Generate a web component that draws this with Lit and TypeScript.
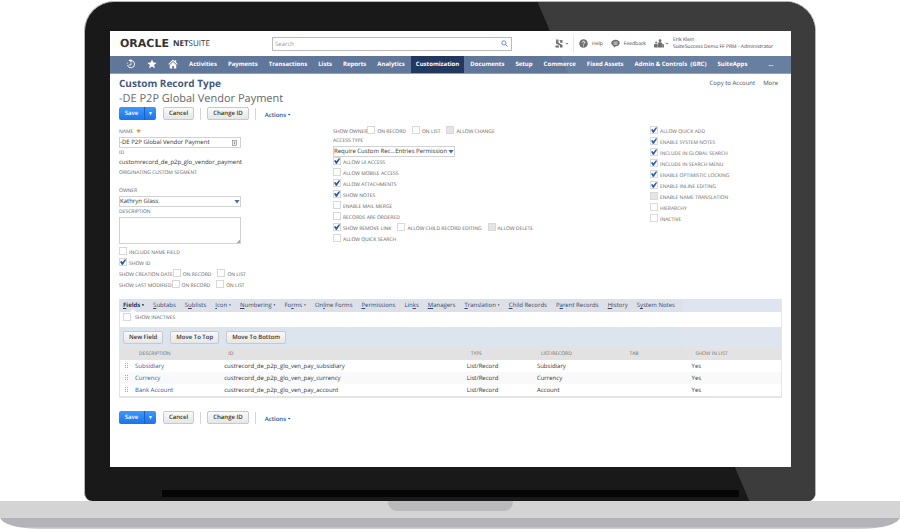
import { LitElement, html, css, svg, nothing, TemplateResult } from "lit";
import { customElement } from "lit/decorators.js";

interface Check { label: string; on?: boolean; off?: boolean; }

const NAV = ["Activities", "Payments", "Transactions", "Lists", "Reports", "Analytics", "Customization",
  "Documents", "Setup", "Commerce", "Fixed Assets", "Admin & Controls  (GRC)", "SuiteApps"];

/* An underscore marks the access key of a tab, a trailing dot the tabs that hold data. */
const TABS = ["_Fields •", "_Subtabs", "S_ublists", "_Icon •", "_Numbering •", "Fo_rms •", "On_line Forms",
  "_Permissions", "Lin_ks", "_Managers", "_Translation •", "_Child Records", "P_arent Records", "_History", "S_ystem Notes"];

const ACCESS: Check[][] = [
  [{ label: "ALLOW UI ACCESS", on: true }],
  [{ label: "ALLOW MOBILE ACCESS" }],
  [{ label: "ALLOW ATTACHMENTS", on: true }],
  [{ label: "SHOW NOTES", on: true }],
  [{ label: "ENABLE MAIL MERGE" }],
  [{ label: "RECORDS ARE ORDERED" }],
  [{ label: "SHOW REMOVE LINK", on: true }, { label: "ALLOW CHILD RECORD EDITING" }, { label: "ALLOW DELETE", off: true }],
  [{ label: "ALLOW QUICK SEARCH" }],
];

const OPTIONS: Check[][] = [
  [{ label: "ALLOW QUICK ADD", on: true }],
  [{ label: "ENABLE SYSTEM NOTES", on: true }],
  [{ label: "INCLUDE IN GLOBAL SEARCH", on: true }],
  [{ label: "INCLUDE IN SEARCH MENU", on: true }],
  [{ label: "ENABLE OPTIMISTIC LOCKING", on: true }],
  [{ label: "ENABLE INLINE EDITING", on: true }],
  [{ label: "ENABLE NAME TRANSLATION", off: true }],
  [{ label: "HIERARCHY" }],
  [{ label: "INACTIVE" }],
];

const ROWS = [
  ["Subsidiary", "custrecord_de_p2p_glo_ven_pay_subsidiary", "Subsidiary"],
  ["Currency", "custrecord_de_p2p_glo_ven_pay_currency", "Currency"],
  ["Bank Account", "custrecord_de_p2p_glo_ven_pay_account", "Account"],
];

const icon = (cls: string, box: string, body: unknown) =>
  html`<svg class=${cls} viewBox=${box} aria-hidden="true">${body}</svg>`;

const clockIcon = icon("nav-icon", "0 0 20 20", svg`
  <path d="M10 3a7.300 7.300 0 1 1-7.200 9" fill="none" stroke="#fff" stroke-width="1.800"/>
  <path d="M4.500 2.500L11 .5v6z" fill="#fff"/>
  <path d="M10 7v5H5.500" fill="none" stroke="#fff" stroke-width="1.700"/>
  <path d="M2.300 9.500l1.200-2.300" stroke="#fff" stroke-width="1.500"/>`);
const starIcon = icon("nav-icon", "0 0 20 20", svg`
  <path d="M10 1l2.600 6.200 6.700.5-5.100 4.400 1.600 6.600-5.800-3.600-5.800 3.600 1.600-6.600L.7 7.700l6.700-.5z" fill="#fff"/>`);
const homeIcon = icon("nav-icon", "0 0 20 20", svg`
  <path d="M10 1l3.500 3.300V2.500h2.800V7l3 2.900-1.200 1.400L10 3.800l-8.100 7.500L.7 9.900z" fill="#fff"/>
  <path d="M10 5.800l6.500 6V19h-4.800v-5.200H8.300V19H3.500v-7.200z" fill="#fff"/>`);
const searchIcon = icon("glass", "0 0 14 14", svg`
  <circle cx="5.800" cy="5.800" r="4.200" fill="none" stroke="#4a6da6" stroke-width="1.500"/>
  <path d="M9 9l4 4" stroke="#4a6da6" stroke-width="1.800"/>`);
const createIcon = icon("tool", "0 0 18 18", svg`
  <path d="M2 1h5v8H2z" fill="#777"/>
  <path d="M9 2h6v6h-4z" fill="#777"/>
  <path d="M2 5l13 7v5h-5v-4L2 9zM1 13h7v4H1z" fill="#666"/>`);
const helpIcon = icon("tool", "0 0 18 18", svg`
  <circle cx="9" cy="9" r="8.500" fill="#666"/>
  <path d="M6.300 7.200c0-3.600 5.600-3.400 5.400-.3-.1 1.900-2.600 2-2.600 4.100" fill="none" stroke="#fff" stroke-width="1.900"/>
  <circle cx="9.100" cy="13.600" r="1.200" fill="#fff"/>`);
const feedbackIcon = icon("tool", "0 0 18 18", svg`
  <path d="M9 1.500c5 0 8.500 2.800 8.500 6.600s-3.500 6.600-8 6.600L5.500 17.500v-3.400C2.300 13 .5 11 .5 8.100.5 4.300 4 1.500 9 1.500z" fill="#666"/>
  <path d="M5 6h8M5 8.300h8M5 10.600h8" stroke="#fff" stroke-width="1.100"/>`);
const roleIcon = icon("role-icon", "0 0 20 18", svg`
  <circle cx="12" cy="3.500" r="2.800" fill="#666"/><circle cx="4.500" cy="7" r="2.200" fill="#777"/>
  <path d="M7.500 17V9.500c0-4 9-4 9 0V17zM0 17v-5c0-3.500 7-3.500 7 0v5zM17 17v-7c2 0 3 1 3 3v4z" fill="#666"/>`);
const memoIcon = icon("memo", "0 0 10 12", svg`
  <rect x="1" y="1" width="8" height="10" fill="#fff" stroke="#777" stroke-width="1.200"/>
  <path d="M5 3v6M3.500 4.500h3M3.500 7.500h3" stroke="#666" stroke-width="1"/>`);
const gripIcon = icon("grip", "0 0 4 6", svg`
  <path d="M0 0h1v1H0zM2 0h1v1H2zM0 2h1v1H0zM2 2h1v1H2zM0 4h1v1H0zM2 4h1v1H2z" fill="#aaa"/>`);

@customElement("app-root")
export class AppRoot extends LitElement {
  static styles = css`
    :host { display: flex; flex-direction: column; min-height: 100vh; background: #fff; color: #444;
      font-family: "Open Sans", "Noto Sans", sans-serif; font-size: 6px; line-height: 8px; text-rendering: geometricPrecision; }
    * { box-sizing: border-box; }
    button, input, select, textarea { font: inherit; color: inherit; margin: 0; border-radius: 0; text-rendering: inherit; }
    a { color: inherit; text-decoration: none; }
    h1, h2, p { margin: 0; }
    svg { display: block; flex: none; }

    .lid { position: relative; flex: 1; display: flex; flex-direction: column; margin: 1px 84px 0;
      padding: 29px 24px 0 25px; background: #191919; border: solid #b4b6b6; border-width: 1px 1px 0;
      border-radius: 30px 30px 8px 8px; overflow: hidden; }
    .lid::before, .lid::after { content: ""; position: absolute; inset: 0; pointer-events: none;
      clip-path: polygon(62% 0, 100% 0, 100% 100%, 91% 100%); }
    .lid::before { background: #303030; }
    .lid::after { background: rgba(255, 255, 255, 0.06); }
    .screen { position: relative; flex: 1; background: #fff; min-width: 0; }
    .chin { display: flex; flex-direction: column; height: 34px; padding: 23px 52px 0; }
    .hinge { position: relative; height: 7px; background: #050505; }
    .base { position: relative; height: 28px; background: linear-gradient(#d4d4d4 17px, #b4b3b9 17px, #b4b3b9 26px, #cfcfd2 27px);
      border-radius: 0 0 40px 40px / 0 0 12px 12px; }
    .notch { width: 125px; height: 10px; margin: 0 auto; background: #bababc; border-radius: 0 0 9px 9px; }

    .top { display: flex; align-items: center; height: 25px; padding: 0 18px 0 10px; }
    .logo { display: flex; align-items: center; gap: 4px; width: 152px; color: #333; line-height: 12px; }
    .oracle { font: bold 11px/12px "DejaVu Sans", sans-serif; }
    .netsuite { font-size: 8px; }
    .search { display: flex; align-items: center; width: 240px; height: 14px; border: 1px solid #bbb; padding: 0 3px 0 2px; }
    .search input { flex: 1; min-width: 0; border: 0; padding: 0; outline: 0; background: none; }
    .search input::placeholder { color: #999; }
    .glass { width: 7px; height: 7px; }
    .tools { display: flex; align-items: center; margin-left: auto; font-size: 5px; color: #333; }
    .tool { width: 9px; height: 9px; }
    .role-icon { width: 10px; height: 9px; }
    .caret { width: 4px; height: 2px; margin-left: 1px; background: #666; clip-path: polygon(0 0, 100% 0, 50% 100%); }
    .item { display: flex; align-items: center; gap: 4px; margin-right: 8px; }
    .pick { display: flex; align-items: center; margin-right: 4px; }
    .rule { width: 1px; height: 18px; background: #e6e6e6; margin-right: 5px; }
    .who { line-height: 7px; white-space: nowrap; }

    .nav { display: flex; align-items: center; gap: 1px; height: 18px; padding-left: 11px; background: #607799; color: #fff;
      font-weight: 700; white-space: pre; border-bottom: 1px solid #8c9ebc; }
    .nav a { display: flex; align-items: center; height: 17px; padding: 0 5px 1px; }
    .nav a.current { background: #22385f; }
    .nav a.more { margin-left: 10px; }
    .nav-icon { width: 10px; height: 10px; }

    .page { padding: 3px 9px 0; }
    .heading { display: flex; justify-content: space-between; padding-right: 4px; line-height: 12px; }
    .heading h1 { font-size: 10px; line-height: 12px; color: #46597f; }
    .links { display: flex; gap: 8px; }
    .page h2 { font-size: 11px; line-height: 16px; margin-top: 2px; font-weight: 400; color: #666; }
    .actions { display: flex; align-items: center; height: 13px; }
    .btn { height: 13px; padding: 0 5px; border: 1px solid #c9c9c9; border-radius: 2px; background: linear-gradient(#fafafa, #e6e6e6);
      font-weight: 600; line-height: 11px; color: #333; white-space: nowrap; }
    .split { display: flex; margin-right: 7px; }
    .btn.save { width: 25px; border: 0; border-radius: 2px 0 0 2px; background: linear-gradient(#3d98fb, #1b74e8); color: #fff; }
    .btn.drop { display: flex; align-items: center; justify-content: center; width: 12px; padding: 0; border: 0; border-left: 1px solid #1762c4;
      border-radius: 0 2px 2px 0; background: linear-gradient(#3d98fb, #1b74e8); }
    .drop i { width: 4px; height: 4px; background: #d4e6ff; clip-path: polygon(0 0, 100% 0, 50% 100%); }
    .bar { width: 1px; height: 12px; margin: 0 6px; background: #d4d4d4; }
    .menu { display: flex; align-items: center; border: 0; background: none; padding: 2px 0 0 3px; color: #2a4f90; font-weight: 600; line-height: 8px; }
    .menu .caret { background: #2a4f90; }

    .form { display: grid; grid-template-columns: 214fr 317fr 132fr; margin-top: 6px; font-size: 5px; color: #555; }
    .first { padding-top: 2px; }
    .label { display: block; height: 9px; line-height: 9px; }
    .need { color: #d8902a; font-size: 8px; font-weight: 700; line-height: 6px; vertical-align: -2px; margin-left: 2px; }
    .box { display: flex; align-items: center; width: 122px; height: 11px; border: 1px solid #d2d2d2; background: #fff; font-size: 6px; color: #333; }
    .box input, .box select { flex: 1; min-width: 0; height: 9px; border: 0; padding: 0; outline: 0; background: none; appearance: none; line-height: 9px; }
    .box .arrow { flex: none; width: 6px; height: 4px; background: #4b6ba3; clip-path: polygon(0 0, 100% 0, 50% 100%); }
    .memo { width: 5px; height: 6px; margin-right: 3px; }
    textarea.area { display: block; width: 122px; height: 27px; border: 1px solid #d2d2d2; padding: 1px; resize: both; }
    textarea.area::-webkit-resizer { background: linear-gradient(135deg, #fff 88%, #aaa 88%); }
    .value { font-size: 6px; line-height: 8px; color: #333; }
    .tight { margin-bottom: 1px; }
    .group { margin-bottom: 3px; }
    .spaced { margin-bottom: 9px; }
    .line { display: flex; align-items: center; height: 11px; white-space: nowrap; }
    .line label { display: flex; align-items: center; gap: 2px; margin-right: 6px; }
    .line input { appearance: none; position: relative; width: 8px; height: 8px; margin-bottom: 3px; border: 1px solid #d8d8d8; background: #fff; }
    .line input:disabled { background: #e4e4e4; }
    .line input:checked::before { content: ""; position: absolute; inset: 0; background: #2458a8;
      clip-path: polygon(0 45%, 25% 35%, 40% 55%, 85% 0, 100% 15%, 45% 100%, 30% 95%); }

    .tabs { display: flex; align-items: center; gap: 9px; height: 13px; margin-top: 8px; padding-left: 4px; background: linear-gradient(90deg, #dde0e7 85%, #dce4f0 85%);
      color: #34496f; white-space: nowrap; }
    .tabs a { position: relative; line-height: 13px; }
    .tabs a.current { font-weight: 700; color: #22385f; }
    .tabs a.current::after { content: ""; position: absolute; left: 7px; bottom: 0; width: 6px; height: 3px; background: #fff; clip-path: polygon(50% 0, 100% 100%, 0 100%); }
    .panel { border: solid #e4e4e4; border-width: 0 1px 2px; }
    .inactive { height: 15px; padding-left: 3px; align-items: flex-start; font-size: 5px; color: #555; }
    .inactive label { gap: 4px; height: 12px; }
    .tray { display: flex; align-items: center; gap: 7px; height: 21px; padding-left: 3px; background: #dce4ee; }
    table { width: 100%; border-collapse: collapse; table-layout: fixed; color: #333; }
    th { height: 12px; padding: 0 0 0 4px; background: #e2e2e2; text-align: left; font-size: 5px; font-weight: 400; color: #666; }
    td { height: 12px; padding: 0; white-space: nowrap; }
    tbody tr:nth-child(2) { background: #f9f9f9; }
    td a { color: #2c5ca6; }
    .grip { width: 4px; height: 6px; margin-left: 5px; }
    .c-grip { width: 15px; } .c-desc { width: 13.5%; } .c-id { width: 36.7%; } .c-type { width: 10.6%; }
    .c-list { width: 13.4%; } .c-tab { width: 10%; }
    .foot { margin-top: 13px; }
  `;

  private checks(list: Check[], lead?: string): TemplateResult {
    return html`<div class="line">${lead ? html`<span>${lead}</span>` : nothing}${list.map(c => html`
      <label><input type="checkbox" .checked=${!!c.on} ?disabled=${!!c.off}>${c.label}</label>`)}</div>`;
  }

  private actions(extra: string): TemplateResult {
    return html`<div class="actions ${extra}">
      <div class="split"><button class="btn save">Save</button><button class="btn drop" aria-label="More save options"><i></i></button></div>
      <button class="btn">Cancel</button><span class="bar"></span>
      <button class="btn">Change ID</button><span class="bar"></span>
      <button class="menu">Actions<span class="caret"></span></button>
    </div>`;
  }

  private tab(text: string, i: number): TemplateResult {
    const at = text.indexOf("_");
    return html`<a href="#" class=${i === 0 ? "current" : ""}>${text.slice(0, at)}<u>${text[at + 1]}</u>${text.slice(at + 2)}</a>`;
  }

  render() {
    return html`
      <div class="lid">
        <main class="screen">
          <header class="top">
            <div class="logo"><span class="oracle">ORACLE</span><span class="netsuite"><b>NET</b>SUITE</span></div>
            <div class="search"><input type="search" aria-label="Search" placeholder="Search">${searchIcon}</div>
            <div class="tools">
              <span class="pick">${createIcon}<span class="caret"></span></span><span class="rule"></span>
              <a href="#" class="item">${helpIcon}Help</a>
              <a href="#" class="item">${feedbackIcon}Feedback</a>
              <span class="pick">${roleIcon}<span class="caret"></span></span>
              <div class="who"><div>Erik Klein</div><div>SuiteSuccess Demo FF PRM - Administrator</div></div>
            </div>
          </header>
          <nav class="nav"><a href="#" aria-label="Recent">${clockIcon}</a><a href="#" aria-label="Shortcuts">${starIcon}</a><a href="#" aria-label="Home">${homeIcon}</a>${
            NAV.map(n => html`<a href="#" class=${n === "Customization" ? "current" : ""}>${n}</a>`)}<a href="#" class="more">...</a></nav>
          <div class="page">
            <div class="heading"><h1>Custom Record Type</h1>
              <div class="links"><a href="#">Copy to Account</a><a href="#">More</a></div></div>
            <h2>-DE P2P Global Vendor Payment</h2>
            ${this.actions("")}
            <form class="form">
              <div class="first">
                <div class="tight"><label class="label" for="name">NAME <span class="need">*</span></label>
                  <div class="box"><input id="name" type="text" .value=${"-DE P2P Global Vendor Payment"}>${memoIcon}</div></div>
                <div class="group"><span class="label">ID</span><p class="value">customrecord_de_p2p_glo_vendor_payment</p></div>
                <div class="spaced"><span class="label">ORIGINATING CUSTOM SEGMENT</span></div>
                <div class="tight"><label class="label" for="owner">OWNER</label>
                  <div class="box"><select id="owner"><option>Kathryn Glass</option></select><span class="arrow"></span></div></div>
                <div class="group"><label class="label" for="desc">DESCRIPTION</label><textarea class="area" id="desc"></textarea></div>
                ${this.checks([{ label: "INCLUDE NAME FIELD" }])}
                ${this.checks([{ label: "SHOW ID", on: true }])}
                ${this.checks([{ label: "ON RECORD" }, { label: "ON LIST" }], "SHOW CREATION DATE")}
                ${this.checks([{ label: "ON RECORD" }, { label: "ON LIST" }], "SHOW LAST MODIFIED")}
              </div>
              <div>
                ${this.checks([{ label: "ON RECORD" }, { label: "ON LIST" }, { label: "ALLOW CHANGE", off: true }], "SHOW OWNER")}
                <label class="label" for="access">ACCESS TYPE</label>
                <div class="box"><select id="access"><option>Require Custom Rec...Entries Permission</option></select><span class="arrow"></span></div>
                ${ACCESS.map(r => this.checks(r))}
              </div>
              <div>${OPTIONS.map(r => this.checks(r))}</div>
            </form>
            <nav class="tabs">${TABS.map((t, i) => this.tab(t, i))}</nav>
            <section class="panel">
              <div class="line inactive"><label><input type="checkbox">SHOW INACTIVES</label></div>
              <div class="tray"><button class="btn">New Field</button><button class="btn">Move To Top</button><button class="btn">Move To Bottom</button></div>
              <table>
                <thead><tr><th class="c-grip"></th><th class="c-desc">DESCRIPTION</th><th class="c-id">ID</th><th class="c-type">TYPE</th>
                  <th class="c-list">LIST/RECORD</th><th class="c-tab">TAB</th><th>SHOW IN LIST</th></tr></thead>
                <tbody>${ROWS.map(([name, id, rec]) => html`<tr><td>${gripIcon}</td><td><a href="#">${name}</a></td><td>${id}</td>
                  <td>List/Record</td><td>${rec}</td><td></td><td>Yes</td></tr>`)}</tbody>
              </table>
            </section>
            ${this.actions("foot")}
          </div>
        </main>
        <div class="chin"><div class="hinge"></div></div>
      </div>
      <div class="base"><div class="notch"></div></div>`;
  }
}
